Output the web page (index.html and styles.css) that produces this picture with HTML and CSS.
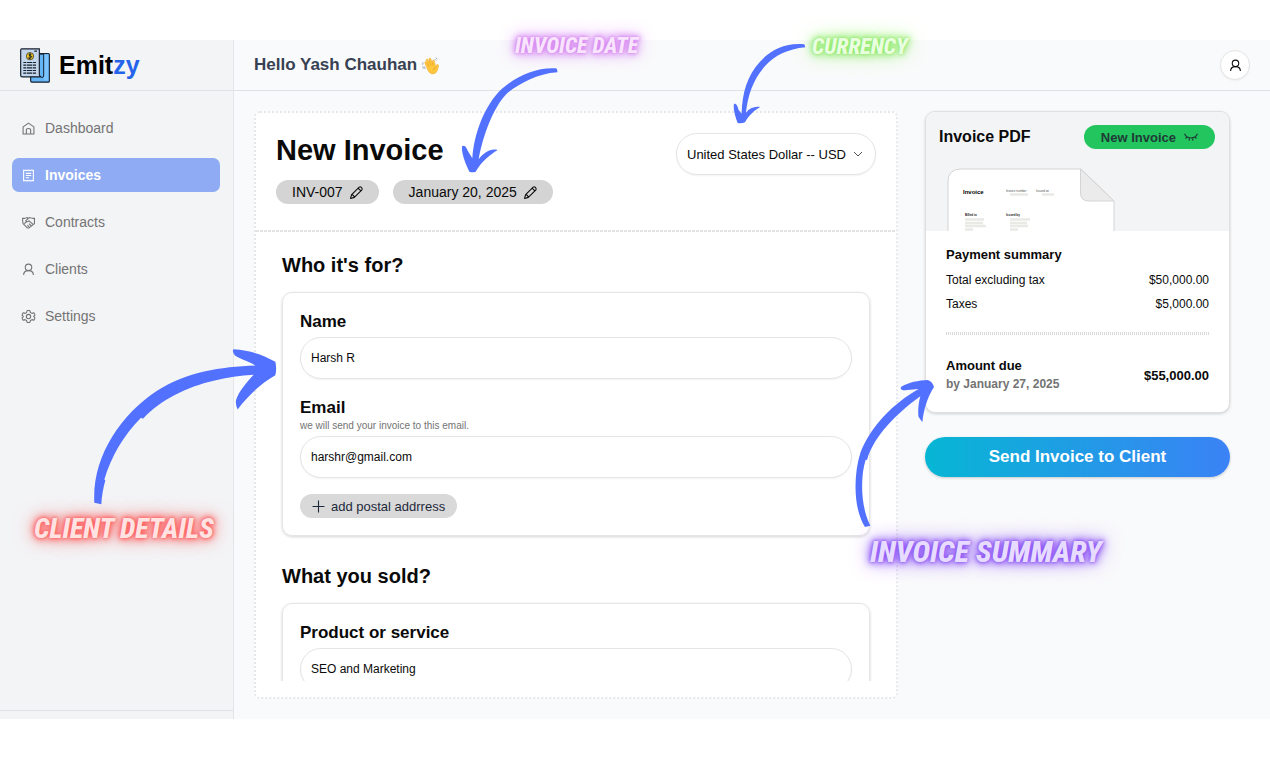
FILE: index.html
```html
<!DOCTYPE html>
<html lang="en">
<head>
<meta charset="utf-8">
<meta name="viewport" content="width=device-width, initial-scale=1">
<title>Emitzy – New Invoice</title>
<link rel="stylesheet" href="styles.css">
</head>
<body>
<svg class="defs" aria-hidden="true">
  <symbol id="user" viewBox="0 0 24 24"><circle cx="12" cy="8" r="6"/><path d="M3 22c0-5 3.500-8 9-8s9 3 9 8"/></symbol>
  <symbol id="pencil" viewBox="0 0 24 24"><path d="M1 23l2-7L17 2q2-1.500 4 .5t1 4.500L8 21zM15 4l5 5M3 16q4 0 5 5"/></symbol>
</svg>

<div class="app">
  <aside class="sidebar">
    <div class="brand">
      <svg class="logo" viewBox="0 0 90 104" aria-hidden="true">
        <path d="M58 16h27q3 0 3 3v80q0 3-3 3H35q-3 0-3-4V84h22z" fill="#64b5f6" stroke="#17212f" stroke-width="3.500"/>
        <path d="M72 20h13v77H72z" fill="#7cc4ff"/>
        <path d="M60 18h11v66q0 4-7 4" fill="#64b5f6" stroke="#17212f" stroke-width="3"/>
        <path d="M5 2h53v78q0 5 6 6H7q-5 0-5-5V6q0-4 3-4z" fill="#c3d5ea" stroke="#17212f" stroke-width="3.500"/>
        <circle cx="30" cy="24" r="11" fill="#f2c61f" stroke="#17212f" stroke-width="2"/>
        <path d="M34 19q-7-3-7 1t6 4-1 5-7-1M30 15v18" fill="none" stroke="#17212f" stroke-width="3"/>
        <path d="M10 43h40M10 51h40M10 59h40M10 67h40M10 75h40M43 9h8" stroke="#17212f" stroke-width="3.500" stroke-dasharray="9 2 16 2"/>
      </svg>
      <span class="wordmark">Emit<span>zy</span></span>
    </div>
    <nav class="nav">
      <a href="#"><svg class="icon" viewBox="0 0 24 24"><path d="M2 9l10-7 10 7v13H2zM8 22v-7q0-3 4-3t4 3v7"/></svg>Dashboard</a>
      <a href="#" class="active" aria-current="page"><svg class="icon" viewBox="0 0 24 24"><path d="M3 2l2 1 2-1 2 1 3-1 3 1 2-1 2 1 2-1v20l-2-1-2 1-2-1-3 1-3-1-2 1-2-1-2 1zM7 8h10M7 12h10M7 16h6"/></svg>Invoices</a>
      <a href="#"><svg class="icon" viewBox="0 0 24 24"><path d="M1 4q5 1 8-1l3 1 3-1q4 2 8 1v10l-10 8q-3 1-5-2l-6-6q-1-4-1-10zM12 4L7 9q2 3 6 0l8 7M4 14l4-3M13 14l4 4M10 17l3 3"/></svg>Contracts</a>
      <a href="#"><svg class="icon"><use href="#user"/></svg>Clients</a>
      <a href="#"><svg class="icon" viewBox="0 0 24 24"><circle cx="12" cy="12" r="4"/><path d="M9.500 1h5l1 3.500 3 1.700 3.500-1 2 4.300-2.500 2.500 2.500 2.500-2 4.300-3.500-1-3 1.700-1 3.500h-5l-1-3.500-3-1.700-3.500 1-2-4.300L2.500 12 0 9.500l2-4.300 3.500 1 3-1.700z"/></svg>Settings</a>
    </nav>
    <div class="sidebar-foot"></div>
  </aside>

  <div class="main">
    <header class="topbar">
      <p class="hello">Hello Yash Chauhan
        <svg class="wave" viewBox="0 0 54 54" role="img" aria-label="waving hand">
          <path d="M13 31L8 20q-1-4 3-4l4 5-3-9q0-4 4-3l5 8-1-9q2-4 5 0l4 11 1-6q3-4 5 1l2 8q1 5 2 9l3-6q5-2 5 3l-3 12q-4 11-14 11-11 0-17-20z" fill="#ffc83d" stroke="#eda52b" stroke-width="1.500"/>
          <path d="M15 21l5 9M21 17l5 10M29 19l3 8M32 41q1-7 8-10" fill="none" stroke="#d98b1c" stroke-width="1.500"/>
          <path d="M3 18l-1 7M7 30l2 7M2 29l2 7M39 5l5 4M36 9l4 4" fill="none" stroke="#7b8794" stroke-width="2"/>
        </svg>
      </p>
      <button class="profile" type="button" aria-label="Profile"><svg class="icon"><use href="#user"/></svg></button>
    </header>

    <main class="content">
      <form class="invoice">
        <div class="invoice-head">
          <div>
            <h1>New Invoice</h1>
            <div class="pills">
              <button class="pill" type="button">INV-007 <svg class="icon"><use href="#pencil"/></svg></button>
              <button class="pill" type="button">January 20, 2025 <svg class="icon"><use href="#pencil"/></svg></button>
            </div>
          </div>
          <div class="select">
            <select aria-label="Currency"><option>United States Dollar -- USD</option></select>
            <svg class="chevron" viewBox="0 0 10 10" aria-hidden="true"><path d="M1 3l4 4 4-4"/></svg>
          </div>
        </div>
        <div class="scroll">
          <section>
            <h2>Who it's for?</h2>
            <div class="panel">
              <div class="field">
                <label for="name">Name</label>
                <input id="name" type="text" value="Harsh R">
              </div>
              <div class="field">
                <label for="email">Email</label>
                <small id="email-hint">we will send your invoice to this email.</small>
                <input id="email" type="email" value="harshr@gmail.com" aria-describedby="email-hint">
              </div>
              <button class="add" type="button"><svg class="icon" viewBox="0 0 24 24"><path d="M12 1v22M1 12h22"/></svg>add postal addrress</button>
            </div>
          </section>
          <section>
            <h2>What you sold?</h2>
            <div class="panel">
              <div class="field">
                <label for="product">Product or service</label>
                <input id="product" type="text" value="SEO and Marketing">
              </div>
            </div>
          </section>
        </div>
      </form>

      <aside class="side">
        <section class="summary">
          <div class="preview">
            <div class="preview-head">
              <h3>Invoice PDF</h3>
              <button class="toggle" type="button">New Invoice <svg class="lash" viewBox="0 0 36 21" aria-hidden="true"><path d="M1 2q5 11 17 11T35 2M7 9l-3 6M14 13l-1 7M22 13l1 7M29 9l3 6"/></svg></button>
            </div>
            <svg class="doc" viewBox="0 0 168 63" role="img" aria-label="Invoice preview">
              <path d="M1 64V14Q1 1 14 1H134L167 33V64z" fill="#fff" stroke="#d4d4d4"/>
              <path d="M133.500 1V25Q133.500 33 142 33H167z" fill="#ebebeb" stroke="#d4d4d4"/>
              <g class="doc-text">
                <text class="doc-title" x="16" y="26">Invoice</text>
                <text x="59" y="24">Invoice number</text>
                <text x="89" y="24">Issued on</text>
                <text class="strong" x="18" y="48">Billed to</text>
                <text class="strong" x="59" y="48">Issued by</text>
              </g>
              <path d="M63 26.500h18M95 26.500h12M18 51.500h19M18 55h18M18 58h21M18 61.500h8M63 51.500h20M63 55h17M63 58h18M63 61.500h8" stroke="#e9e9e6" stroke-width="2.500"/>
            </svg>
          </div>
          <div class="totals">
            <h4>Payment summary</h4>
            <dl>
              <div><dt>Total excluding tax</dt><dd>$50,000.00</dd></div>
              <div><dt>Taxes</dt><dd>$5,000.00</dd></div>
            </dl>
            <div class="due">
              <div><h4>Amount due</h4><p>by January 27, 2025</p></div>
              <strong>$55,000.00</strong>
            </div>
          </div>
        </section>
        <button class="send" type="button">Send Invoice to Client</button>
      </aside>
    </main>
  </div>
</div>

<div class="notes">
  <span class="note note-date">INVOICE DATE</span>
  <svg class="arrow arrow-date" viewBox="36 142 288 318"><path d="M318 146Q323 148 322 158C260 162 205 194 170 222C130 262 98 350 86 419C100 401 120 385 143 391C120 405 95 425 77 456Q68 460 58 456C45 430 34 400 36 380C45 374 50 385 54 395L67 416C72 340 105 255 155 208C200 168 262 142 318 146Z"/></svg>
  <span class="note note-currency">CURRENCY</span>
  <svg class="arrow arrow-currency" viewBox="220 70 220 244"><path d="M435 74L438 83C385 88 345 108 318 138C282 178 265 225 259 280C270 266 285 260 302 263C285 272 268 288 256 309Q245 314 234 311C226 290 220 270 223 253C231 252 234 260 237 272L246 283C248 220 262 170 302 126C335 88 385 68 435 74Z"/></svg>
  <span class="note note-client">CLIENT DETAILS</span>
  <svg class="arrow arrow-client" viewBox="218 24 552 470"><path d="M222 488L243 492C244 470 248 445 255 420L252 418C272 350 310 285 362 233L368 236C420 180 500 140 580 122C620 112 660 106 700 104C680 125 655 155 647 180Q645 195 652 208C680 170 720 130 765 105Q770 85 765 65C730 45 690 30 640 27C634 30 640 42 645 47C665 60 690 65 705 76C600 80 500 95 410 152C300 225 215 350 222 488Z"/></svg>
  <span class="note note-summary">INVOICE SUMMARY</span>
  <svg class="arrow arrow-summary" viewBox="44 28 240 444"><path d="M74 472L90 468C60 410 60 320 76 270L80 271C100 200 170 130 240 80C234 100 232 130 235 142L246 158C250 120 262 80 281 52C278 42 272 33 262 31C235 32 205 38 182 52C178 62 190 63 210 60L235 58C160 100 90 170 60 250C38 320 40 420 74 472Z"/></svg>
</div>
</body>
</html>
```
FILE: styles.css
```css
*, *::before, *::after { box-sizing: border-box; }

body {
  margin: 0;
  height: 100vh;
  padding: 40px 0 41px;
  position: relative;
  overflow: hidden;
  background: #fff;
  color: #0a0a0a;
  font-family: "Liberation Sans", Arial, sans-serif;
  font-size: 14px;
}

h1, h2, h3, h4, p, dl, dd { margin: 0; }

button, input, select {
  font: inherit;
  color: inherit;
  margin: 0;
}

button { border: 0; cursor: pointer; }

.defs { position: absolute; width: 0; height: 0; }

.icon {
  width: 13px;
  height: 13px;
  flex: none;
  fill: none;
  stroke: currentColor;
  stroke-width: 2;
  stroke-linejoin: round;
  overflow: visible;
}

.app {
  height: 100%;
  display: grid;
  grid-template-columns: 234px 1fr;
  background: #f9fafb;
}

/* Sidebar */
.sidebar {
  display: flex;
  flex-direction: column;
  background: #f3f4f6;
  border-right: 1px solid #e3e5e8;
}

.brand {
  height: 51px;
  display: flex;
  align-items: center;
  gap: 9px;
  padding-left: 20px;
  border-bottom: 1px solid #dfe1e4;
}

.logo { width: 30px; height: 35px; }

.wordmark { font-size: 25px; font-weight: 700; color: #000; }
.wordmark span { color: #2563eb; }

.nav {
  flex: 1;
  display: flex;
  flex-direction: column;
  gap: 13px;
  padding: 20px 13px 0 12px;
}

.nav a {
  height: 34px;
  display: flex;
  align-items: center;
  gap: 10px;
  padding-left: 10px;
  border-radius: 7px;
  color: #737373;
  text-decoration: none;
}

.nav a.active { background: #8eabf3; color: #fff; font-weight: 700; }

.sidebar-foot { height: 9px; border-top: 1px solid #dfe1e4; }

/* Main column */
.main { display: flex; flex-direction: column; min-width: 0; min-height: 0; }

.topbar {
  height: 51px;
  flex: none;
  display: flex;
  align-items: center;
  justify-content: space-between;
  padding: 0 20px;
  border-bottom: 1px solid #dfe1e4;
}

.hello {
  display: flex;
  align-items: center;
  gap: 5px;
  font-size: 17px;
  font-weight: 700;
  color: #374151;
}

.wave { width: 19px; height: 19px; }

.profile {
  width: 30px;
  height: 30px;
  display: grid;
  place-items: center;
  padding: 0;
  border: 1px solid #e5e5e5;
  border-radius: 50%;
  background: #fff;
  box-shadow: 0 1px 2px #0000000d;
}

.content {
  flex: 1;
  min-height: 0;
  display: grid;
  grid-template-columns: 1fr 305px;
  gap: 27px;
  padding: 20px 40px 20px 20px;
}

/* Invoice form */
.invoice {
  min-height: 0;
  display: flex;
  flex-direction: column;
  padding-bottom: 16px;
  background: #fff;
  border: 2px dotted #e5e7eb;
  border-radius: 6px;
}

.invoice-head {
  display: flex;
  justify-content: space-between;
  align-items: flex-start;
  padding: 20px 20px 28px;
  background: repeating-linear-gradient(90deg, #e2e3e5 0 3px, #fff 3px 4px) bottom / 100% 2px no-repeat;
}

h1 { font-size: 29px; line-height: 34px; }

.pills { display: flex; gap: 14px; margin-top: 13px; }

.pill {
  height: 24px;
  display: flex;
  align-items: center;
  gap: 7px;
  padding: 0 16px;
  border-radius: 12px;
  background: #d4d4d4;
}

.select { position: relative; }

.select select {
  width: 200px;
  height: 42px;
  padding: 0 24px 0 10px;
  appearance: none;
  border: 1px solid #e5e5e5;
  border-radius: 21px;
  background: #fff;
  font-size: 13px;
  box-shadow: 0 1px 2px #0000000d;
}

.chevron {
  position: absolute;
  right: 13px;
  top: 16px;
  width: 10px;
  height: 10px;
  fill: none;
  stroke: #525252;
  pointer-events: none;
}

.scroll { flex: 1; min-height: 0; overflow: hidden; padding: 21px 26px 0; }

.scroll section + section { margin-top: 28px; }

h2 { font-size: 20px; line-height: 24px; margin-bottom: 15px; }

.panel {
  display: flex;
  flex-direction: column;
  align-items: flex-start;
  padding: 19px 17px 17px;
  border: 1px solid #e5e5e5;
  border-radius: 10px;
  box-shadow: 0 1px 3px #0000002b;
}

.field {
  width: 100%;
  display: flex;
  flex-direction: column;
}

.field + .field { margin-top: 19px; }

.field label { font-size: 17px; font-weight: 700; line-height: 20px; }

.field small { margin-top: 2px; font-size: 10px; line-height: 11px; color: #737373; }

.field input {
  height: 42px;
  margin-top: 5px;
  padding: 0 10px;
  border: 1px solid #e5e5e5;
  border-radius: 21px;
  background: #fff;
  font-size: 12px;
  box-shadow: 0 1px 2px #0000000d;
}

.add {
  height: 24px;
  display: flex;
  align-items: center;
  gap: 6px;
  margin-top: 16px;
  padding: 0 12px;
  border-radius: 12px;
  background: #d9d9d9;
  color: #1e293b;
  font-size: 13px;
}

/* Summary column */
.side { display: flex; flex-direction: column; gap: 24px; }

.summary {
  overflow: hidden;
  border: 1px solid #e0e0e0;
  border-radius: 10px;
  background: #fff;
  box-shadow: 0 1px 3px #0000002b;
}

.preview { background: #f3f4f6; padding: 13px 14px 0 13px; }

.preview-head { display: flex; align-items: center; justify-content: space-between; }

h3 { font-size: 16px; }

.toggle {
  height: 24px;
  display: flex;
  align-items: center;
  gap: 8px;
  padding: 0 17px;
  border-radius: 12px;
  background: #22c55e;
  color: #1f3a37;
  font-size: 13px;
  font-weight: 700;
}

.lash {
  width: 14px;
  height: 8px;
  fill: none;
  stroke: currentColor;
  stroke-width: 3;
}

.doc { display: block; width: 168px; height: 63px; margin: 19px 0 0 8px; }

.doc-text { font-size: 3px; fill: #525252; }
.doc-text .strong { font-weight: 700; fill: #171717; }
.doc-text .doc-title { font-size: 6px; font-weight: 700; fill: #000; }

.totals { padding: 15px 20px 19px; }

h4 { font-size: 13px; line-height: 18px; }

dl {
  padding-bottom: 23px;
  background: repeating-linear-gradient(90deg, #d9d9d9 0 1px, #fff 1px 2px) bottom / 100% 3px no-repeat;
}

dl div {
  display: flex;
  justify-content: space-between;
  margin-top: 8px;
  font-size: 12px;
  line-height: 16px;
}

.due {
  display: flex;
  align-items: center;
  justify-content: space-between;
  margin-top: 22px;
}

.due p { font-size: 12px; font-weight: 700; line-height: 18px; color: #737373; }
.due strong { font-size: 13px; }

.send {
  height: 40px;
  border-radius: 20px;
  background: linear-gradient(90deg, #06b6d4, #3b82f6);
  color: #fff;
  font-size: 17px;
  font-weight: 700;
  box-shadow: 0 1px 3px #00000033;
}

/* Callouts drawn over the interface */
.notes { position: absolute; inset: 0; pointer-events: none; }

.note {
  position: absolute;
  white-space: nowrap;
  font-family: "Roboto Condensed", Roboto, "Liberation Sans", sans-serif;
  font-style: italic;
  font-weight: 800;
  line-height: 32px;
  text-shadow: 0 0 3px var(--glow), 0 0 6px var(--glow), 0 0 10px var(--glow), 0 0 20px var(--glow);
}

.note-date { left: 515px; top: 30px; font-size: 22px; color: #f8e4fc; --glow: #d580f0; }
.note-currency { left: 812px; top: 31px; font-size: 22px; color: #eaffe0; --glow: #8fea6a; }
.note-client { left: 34px; top: 513px; font-size: 28px; color: #ffe2e2; --glow: #ff5c5c; }
.note-summary { left: 870px; top: 536px; font-size: 30px; color: #e7dcff; --glow: #8b52f5; }

.arrow { position: absolute; fill: #5271ff; }
.arrow-date { left: 462px; top: 67px; width: 96px; height: 106px; }
.arrow-currency { left: 733px; top: 43px; width: 73px; height: 81px; }
.arrow-client { left: 93px; top: 348px; width: 184px; height: 157px; }
.arrow-summary { left: 855px; top: 379px; width: 80px; height: 148px; }
```
